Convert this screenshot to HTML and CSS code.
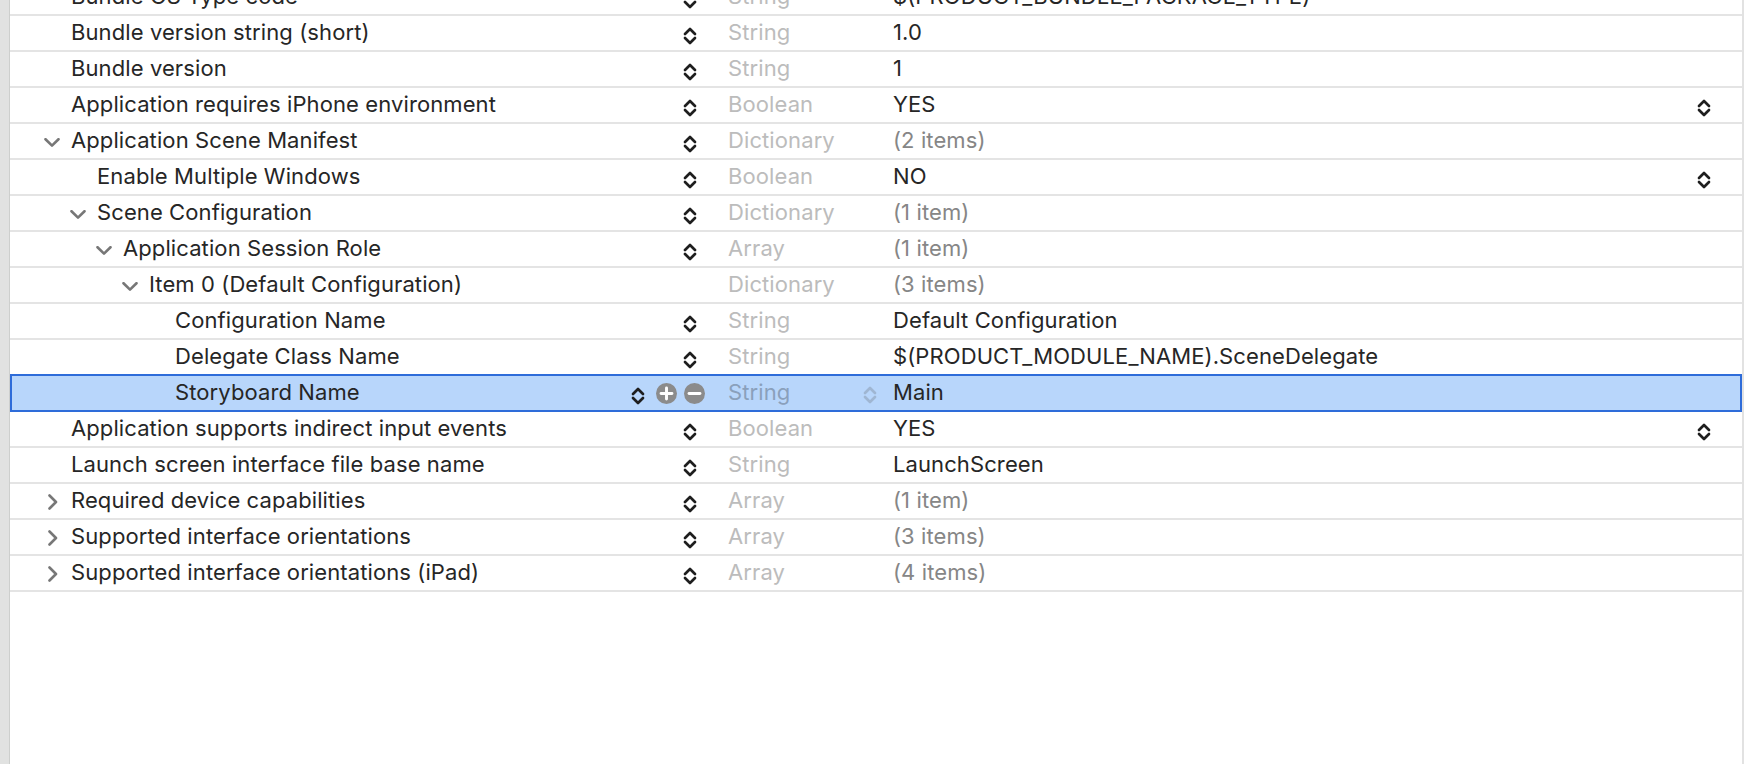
FILE: index.html
```html
<!DOCTYPE html>
<html>
<head>
<meta charset="utf-8">
<link rel="stylesheet" href="styles.css">
</head>
<body>
<div class="window">
  <div class="left-strip"></div>
  <div class="editor">
    <div class="table">
      <div class="row">
        <div class="key lvl0"><span class="disc"></span><span class="name">Bundle OS Type code</span></div>
        <div class="ctrl"><svg class="stepper" viewBox="0 0 14 18"><path d="M2 7L7 2L12 7M2 11L7 16L12 11"/></svg></div>
        <div class="type">String</div>
        <div class="value">$(PRODUCT_BUNDLE_PACKAGE_TYPE)</div>
        <div class="end"></div>
      </div>
      <div class="row">
        <div class="key lvl0"><span class="disc"></span><span class="name">Bundle version string (short)</span></div>
        <div class="ctrl"><svg class="stepper" viewBox="0 0 14 18"><path d="M2 7L7 2L12 7M2 11L7 16L12 11"/></svg></div>
        <div class="type">String</div>
        <div class="value">1.0</div>
        <div class="end"></div>
      </div>
      <div class="row">
        <div class="key lvl0"><span class="disc"></span><span class="name">Bundle version</span></div>
        <div class="ctrl"><svg class="stepper" viewBox="0 0 14 18"><path d="M2 7L7 2L12 7M2 11L7 16L12 11"/></svg></div>
        <div class="type">String</div>
        <div class="value">1</div>
        <div class="end"></div>
      </div>
      <div class="row">
        <div class="key lvl0"><span class="disc"></span><span class="name">Application requires iPhone environment</span></div>
        <div class="ctrl"><svg class="stepper" viewBox="0 0 14 18"><path d="M2 7L7 2L12 7M2 11L7 16L12 11"/></svg></div>
        <div class="type">Boolean</div>
        <div class="value">YES</div>
        <div class="end"><svg class="stepper" viewBox="0 0 14 18"><path d="M2 7L7 2L12 7M2 11L7 16L12 11"/></svg></div>
      </div>
      <div class="row">
        <div class="key lvl0"><span class="disc"><svg class="chev-down" viewBox="0 0 16 9"><path d="M1.5 1.2L8 7.6L14.5 1.2"/></svg></span><span class="name">Application Scene Manifest</span></div>
        <div class="ctrl"><svg class="stepper" viewBox="0 0 14 18"><path d="M2 7L7 2L12 7M2 11L7 16L12 11"/></svg></div>
        <div class="type">Dictionary</div>
        <div class="value muted">(2 items)</div>
        <div class="end"></div>
      </div>
      <div class="row">
        <div class="key lvl1"><span class="disc"></span><span class="name">Enable Multiple Windows</span></div>
        <div class="ctrl"><svg class="stepper" viewBox="0 0 14 18"><path d="M2 7L7 2L12 7M2 11L7 16L12 11"/></svg></div>
        <div class="type">Boolean</div>
        <div class="value">NO</div>
        <div class="end"><svg class="stepper" viewBox="0 0 14 18"><path d="M2 7L7 2L12 7M2 11L7 16L12 11"/></svg></div>
      </div>
      <div class="row">
        <div class="key lvl1"><span class="disc"><svg class="chev-down" viewBox="0 0 16 9"><path d="M1.5 1.2L8 7.6L14.5 1.2"/></svg></span><span class="name">Scene Configuration</span></div>
        <div class="ctrl"><svg class="stepper" viewBox="0 0 14 18"><path d="M2 7L7 2L12 7M2 11L7 16L12 11"/></svg></div>
        <div class="type">Dictionary</div>
        <div class="value muted">(1 item)</div>
        <div class="end"></div>
      </div>
      <div class="row">
        <div class="key lvl2"><span class="disc"><svg class="chev-down" viewBox="0 0 16 9"><path d="M1.5 1.2L8 7.6L14.5 1.2"/></svg></span><span class="name">Application Session Role</span></div>
        <div class="ctrl"><svg class="stepper" viewBox="0 0 14 18"><path d="M2 7L7 2L12 7M2 11L7 16L12 11"/></svg></div>
        <div class="type">Array</div>
        <div class="value muted">(1 item)</div>
        <div class="end"></div>
      </div>
      <div class="row">
        <div class="key lvl3"><span class="disc"><svg class="chev-down" viewBox="0 0 16 9"><path d="M1.5 1.2L8 7.6L14.5 1.2"/></svg></span><span class="name">Item 0 (Default Configuration)</span></div>
        <div class="ctrl"></div>
        <div class="type">Dictionary</div>
        <div class="value muted">(3 items)</div>
        <div class="end"></div>
      </div>
      <div class="row">
        <div class="key lvl4"><span class="disc"></span><span class="name">Configuration Name</span></div>
        <div class="ctrl"><svg class="stepper" viewBox="0 0 14 18"><path d="M2 7L7 2L12 7M2 11L7 16L12 11"/></svg></div>
        <div class="type">String</div>
        <div class="value">Default Configuration</div>
        <div class="end"></div>
      </div>
      <div class="row">
        <div class="key lvl4"><span class="disc"></span><span class="name">Delegate Class Name</span></div>
        <div class="ctrl"><svg class="stepper" viewBox="0 0 14 18"><path d="M2 7L7 2L12 7M2 11L7 16L12 11"/></svg></div>
        <div class="type">String</div>
        <div class="value">$(PRODUCT_MODULE_NAME).SceneDelegate</div>
        <div class="end"></div>
      </div>
      <div class="row selected">
        <div class="key lvl4"><span class="disc"></span><span class="name">Storyboard Name</span></div>
        <div class="ctrl ctrl-sel">
          <svg class="stepper" viewBox="0 0 14 18"><path d="M2 7L7 2L12 7M2 11L7 16L12 11"/></svg>
          <svg class="circ plus" viewBox="0 0 20 20"><circle cx="10" cy="10" r="10"/><path d="M10 4.8V15.2M4.8 10H15.2"/></svg>
          <svg class="circ minus" viewBox="0 0 20 20"><circle cx="10" cy="10" r="10"/><path d="M4.8 10H15.2"/></svg>
        </div>
        <div class="type type-sel"><span>String</span><svg class="stepper light" viewBox="0 0 14 18"><path d="M2 7L7 2L12 7M2 11L7 16L12 11"/></svg></div>
        <div class="value">Main</div>
        <div class="end"></div>
      </div>
      <div class="row">
        <div class="key lvl0"><span class="disc"></span><span class="name">Application supports indirect input events</span></div>
        <div class="ctrl"><svg class="stepper" viewBox="0 0 14 18"><path d="M2 7L7 2L12 7M2 11L7 16L12 11"/></svg></div>
        <div class="type">Boolean</div>
        <div class="value">YES</div>
        <div class="end"><svg class="stepper" viewBox="0 0 14 18"><path d="M2 7L7 2L12 7M2 11L7 16L12 11"/></svg></div>
      </div>
      <div class="row">
        <div class="key lvl0"><span class="disc"></span><span class="name">Launch screen interface file base name</span></div>
        <div class="ctrl"><svg class="stepper" viewBox="0 0 14 18"><path d="M2 7L7 2L12 7M2 11L7 16L12 11"/></svg></div>
        <div class="type">String</div>
        <div class="value">LaunchScreen</div>
        <div class="end"></div>
      </div>
      <div class="row">
        <div class="key lvl0"><span class="disc"><svg class="chev-right" viewBox="0 0 10 16"><path d="M1.5 1.5L8 8L1.5 14.5"/></svg></span><span class="name">Required device capabilities</span></div>
        <div class="ctrl"><svg class="stepper" viewBox="0 0 14 18"><path d="M2 7L7 2L12 7M2 11L7 16L12 11"/></svg></div>
        <div class="type">Array</div>
        <div class="value muted">(1 item)</div>
        <div class="end"></div>
      </div>
      <div class="row">
        <div class="key lvl0"><span class="disc"><svg class="chev-right" viewBox="0 0 10 16"><path d="M1.5 1.5L8 8L1.5 14.5"/></svg></span><span class="name">Supported interface orientations</span></div>
        <div class="ctrl"><svg class="stepper" viewBox="0 0 14 18"><path d="M2 7L7 2L12 7M2 11L7 16L12 11"/></svg></div>
        <div class="type">Array</div>
        <div class="value muted">(3 items)</div>
        <div class="end"></div>
      </div>
      <div class="row">
        <div class="key lvl0"><span class="disc"><svg class="chev-right" viewBox="0 0 10 16"><path d="M1.5 1.5L8 8L1.5 14.5"/></svg></span><span class="name">Supported interface orientations (iPad)</span></div>
        <div class="ctrl"><svg class="stepper" viewBox="0 0 14 18"><path d="M2 7L7 2L12 7M2 11L7 16L12 11"/></svg></div>
        <div class="type">Array</div>
        <div class="value muted">(4 items)</div>
        <div class="end"></div>
      </div>
    </div>
  </div>
  <div class="right-strip"></div>
</div>
</body>
</html>
```

FILE: styles.css
```css
* { box-sizing: border-box; }
html, body {
  margin: 0;
  padding: 0;
  background: #ffffff;
}
body {
  font-family: Inter, "Liberation Sans", sans-serif;
  font-size: 22px;
  letter-spacing: 0.1px;
  color: #262626;
  overflow: hidden;
}
.window {
  display: flex;
  height: 764px;
  overflow: hidden;
}
.left-strip {
  width: 10px;
  flex: none;
  background: #e1e2e1;
  border-right: 1px solid #cdcfcd;
}
.right-strip {
  width: 6px;
  flex: none;
  border-left: 2px solid #e2e2e2;
  background: #ffffff;
}
.editor {
  flex: 1;
  min-width: 0;
}
.table {
  margin-top: -20px;
}
.row {
  display: grid;
  grid-template-columns: 620px 88px 165px 1fr 52px;
  height: 36px;
  padding-bottom: 2px;
  border-bottom: 2px solid #e4e4e4;
  align-items: center;
}
.row.selected {
  background: #b8d6fb;
  border-bottom-color: #2e6cd9;
  box-shadow: 0 -2px 0 #2e6cd9, inset 2px 0 0 #2e6cd9, inset -2px 0 0 #2e6cd9;
  position: relative;
}
.key {
  display: flex;
  align-items: center;
  padding-left: 34px;
  white-space: nowrap;
}
.key.lvl1 { padding-left: 60px; }
.key.lvl2 { padding-left: 86px; }
.key.lvl3 { padding-left: 112px; }
.key.lvl4 { padding-left: 138px; }
.disc {
  width: 27px;
  flex: none;
  display: flex;
  align-items: center;
  height: 20px;
}
.chev-down {
  width: 16px;
  height: 9px;
  margin-top: 4px;
  fill: none;
  stroke: #777777;
  stroke-width: 2.6;
  stroke-linecap: round;
  stroke-linejoin: round;
}
.chev-right {
  width: 10px;
  height: 16px;
  margin-left: 4px;
  margin-top: 3px;
  fill: none;
  stroke: #777777;
  stroke-width: 2.6;
  stroke-linecap: round;
  stroke-linejoin: round;
}
.ctrl {
  display: flex;
  align-items: center;
  justify-content: flex-end;
  padding-right: 21px;
  height: 100%;
}
.ctrl-sel {
  padding-right: 13px;
}
.stepper {
  width: 14px;
  height: 18px;
  margin-top: 7px;
  fill: none;
  stroke: #1e1e1e;
  stroke-width: 2.7;
  stroke-linecap: round;
  stroke-linejoin: round;
  flex: none;
}
.stepper.light {
  stroke: #9fb6d2;
  margin-top: 6px;
}
.circ {
  width: 21px;
  height: 21px;
  flex: none;
  margin-top: 2px;
}
.circ.plus { margin-left: 11px; }
.circ.minus { margin-left: 7px; }
.circ circle { fill: #8b8b8b; }
.circ path {
  stroke: #ffffff;
  stroke-width: 2.8;
  stroke-linecap: round;
  fill: none;
}
.type {
  color: #bcbcbc;
  padding-left: 10px;
  white-space: nowrap;
}
.type-sel {
  display: flex;
  align-items: center;
  justify-content: space-between;
  padding-right: 6px;
  color: #8aa0bb;
}
.value {
  padding-left: 10px;
  white-space: nowrap;
}
.value.muted {
  color: #868686;
}
.end {
  display: flex;
  align-items: center;
  padding-left: 7px;
  height: 100%;
}
```
